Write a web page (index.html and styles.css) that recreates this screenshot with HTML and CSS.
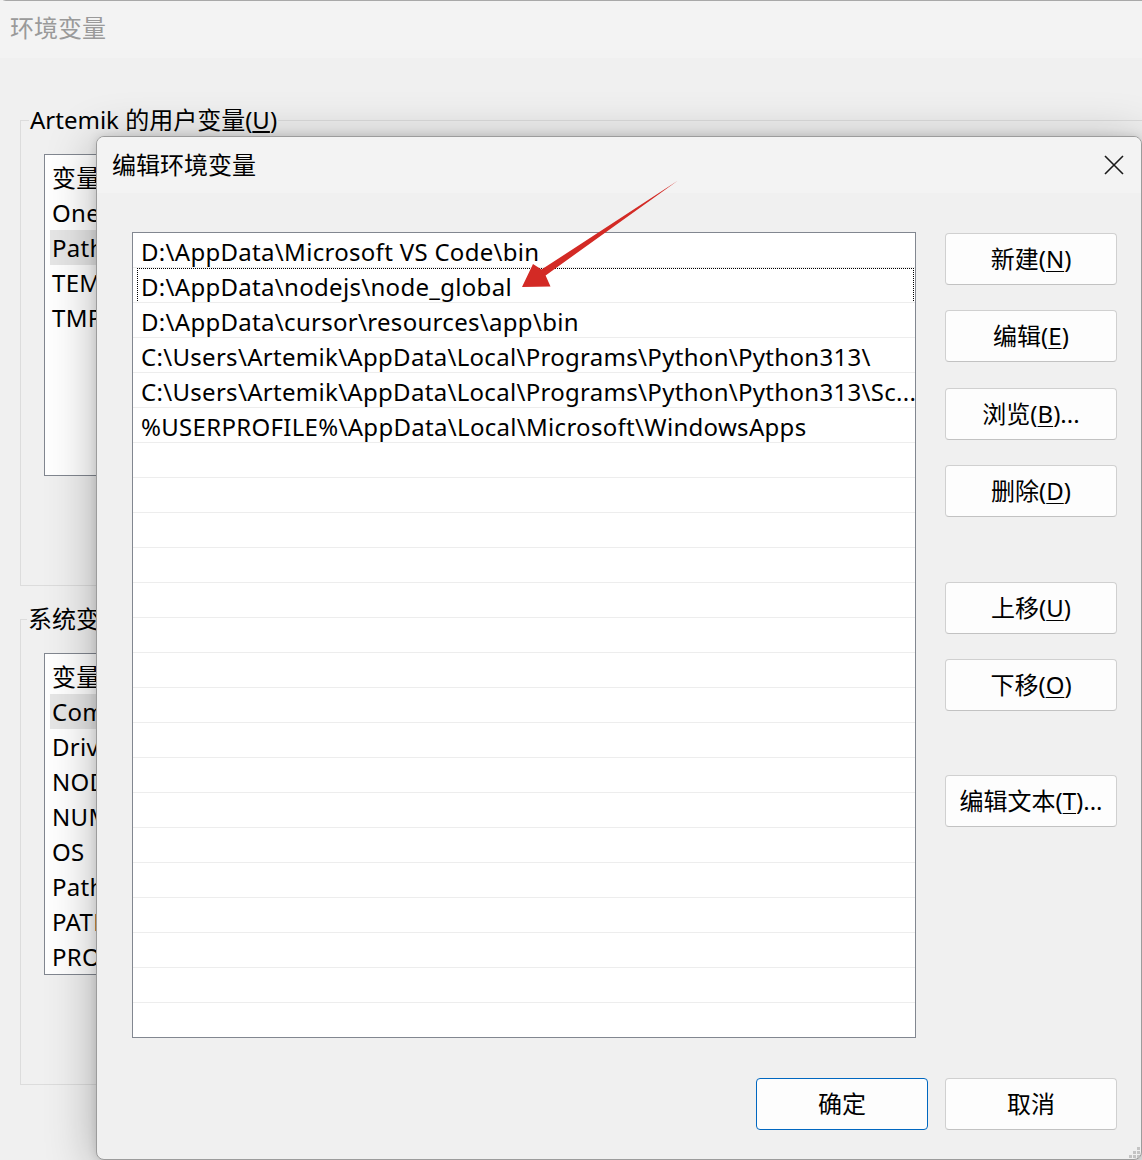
FILE: index.html
```html
<!DOCTYPE html>
<html lang="zh-CN">
<head>
<meta charset="utf-8">
<title>编辑环境变量</title>
<link rel="stylesheet" href="styles.css">
</head>
<body>
<div class="screen">
  <div class="bgwin">
    <div class="bg-title">环境变量</div>
    <div class="bg-body">
      <fieldset class="group">
        <legend>Artemik 的用户变量(<u>U</u>)</legend>
        <div class="varlist">
          <div class="vrow">变量</div>
          <div class="vrow">OneDrive</div>
          <div class="vrow sel">Path</div>
          <div class="vrow">TEMP</div>
          <div class="vrow">TMP</div>
        </div>
      </fieldset>
      <fieldset class="group group-sys">
        <legend>系统变量(<u>S</u>)</legend>
        <div class="varlist">
          <div class="vrow">变量</div>
          <div class="vrow sel">ComSpec</div>
          <div class="vrow">DriverData</div>
          <div class="vrow">NODE_PATH</div>
          <div class="vrow">NUMBER_OF_PROCESSORS</div>
          <div class="vrow">OS</div>
          <div class="vrow">Path</div>
          <div class="vrow">PATHEXT</div>
          <div class="vrow">PROCESSOR_ARCHITECTURE</div>
        </div>
      </fieldset>
    </div>
  </div>

  <div class="dialog">
    <div class="dlg-title">
      <span>编辑环境变量</span>
      <svg class="close" width="20" height="20" viewBox="0 0 20 20"><path d="M1 1 L19 19 M19 1 L1 19" stroke="#1a1a1a" stroke-width="1.6" fill="none"/></svg>
    </div>
    <div class="dlg-body">
      <div class="dlg-main">
        <div class="pathlist">
          <div class="prow">D:\AppData\Microsoft VS Code\bin</div>
          <div class="prow focus">D:\AppData\nodejs\node_global</div>
          <div class="prow">D:\AppData\cursor\resources\app\bin</div>
          <div class="prow">C:\Users\Artemik\AppData\Local\Programs\Python\Python313\</div>
          <div class="prow">C:\Users\Artemik\AppData\Local\Programs\Python\Python313\Sc...</div>
          <div class="prow">%USERPROFILE%\AppData\Local\Microsoft\WindowsApps</div>
          <div class="prow"></div><div class="prow"></div><div class="prow"></div>
          <div class="prow"></div><div class="prow"></div><div class="prow"></div>
          <div class="prow"></div><div class="prow"></div><div class="prow"></div>
          <div class="prow"></div><div class="prow"></div><div class="prow"></div>
          <div class="prow"></div><div class="prow"></div><div class="prow"></div>
          <div class="prow"></div><div class="prow"></div>
        </div>
        <div class="btncol">
          <button class="btn b-new">新建(<u>N</u>)</button>
          <button class="btn b-edit">编辑(<u>E</u>)</button>
          <button class="btn b-browse">浏览(<u>B</u>)...</button>
          <button class="btn b-del">删除(<u>D</u>)</button>
          <button class="btn b-up">上移(<u>U</u>)</button>
          <button class="btn b-down">下移(<u>O</u>)</button>
          <button class="btn b-text">编辑文本(<u>T</u>)...</button>
        </div>
      </div>
      <div class="dlg-foot">
        <button class="btn primary">确定</button>
        <button class="btn">取消</button>
      </div>
    </div>
    <svg class="grip" width="14" height="14" viewBox="0 0 14 14">
      <rect x="10" y="2" width="3" height="3" fill="#c4c4c4"/>
      <rect x="6" y="6" width="3" height="3" fill="#c4c4c4"/>
      <rect x="10" y="6" width="3" height="3" fill="#c4c4c4"/>
      <rect x="2" y="10" width="3" height="3" fill="#c4c4c4"/>
      <rect x="6" y="10" width="3" height="3" fill="#c4c4c4"/>
      <rect x="10" y="10" width="3" height="3" fill="#c4c4c4"/>
    </svg>
  </div>

  <svg class="arrow" width="1142" height="1160" viewBox="0 0 1142 1160">
    <polygon points="522,287 533,264 541.5,269.6 678,180.5 545.6,275.4 550.5,286.5" fill="#d32a25"/>
  </svg>
</div>
</body>
</html>
```

FILE: styles.css
```css
* { box-sizing: border-box; }

html, body {
  margin: 0;
  padding: 0;
}

body {
  width: 1142px;
  height: 1160px;
  overflow: hidden;
  background: #f0f0f0;
  font-family: "Noto Sans", "Noto Sans CJK SC", sans-serif;
  font-size: 24px;
  color: #000;
}

.screen {
  position: relative;
  width: 1142px;
  height: 1160px;
  overflow: hidden;
}

/* background window */
.bgwin {
  height: 1160px;
  background: #f0f0f0;
  border-top: 1px solid #a8a8a8;
  border-top-left-radius: 6px;
}

.bg-title {
  height: 57px;
  background: #f3f3f3;
  color: #9a9a9a;
  padding-left: 10px;
  line-height: 54px;
}

.bg-body {
  padding-top: 46px;
}

.group {
  margin: 0 0 0 20px;
  width: 1160px;
  border: 1px solid #dcdcdc;
  padding: 0 0 109px 23px;
  min-width: 0;
}

.group-sys {
  margin-top: 17px;
}

.group legend {
  margin-left: -15px;
  padding: 0 1px;
  line-height: 32px;
}

.group-sys legend {
  margin-left: -17px;
}

.varlist {
  margin-top: 18px;
  width: 300px;
  height: 322px;
  background: #ffffff;
  border: 1px solid #828790;
  padding: 5px 0 0 5px;
}

.vrow {
  height: 35px;
  line-height: 35px;
  padding-left: 2px;
  white-space: nowrap;
  letter-spacing: 0.3px;
}

.vrow.sel {
  background: #e6e6e6;
}

/* dialog */
.dialog {
  position: absolute;
  left: 96px;
  top: 136px;
  width: 1046px;
  height: 1024px;
  background: #f0f0f0;
  border: 1px solid #9c9c9c;
  border-radius: 8px;
  box-shadow: 0 8px 50px rgba(0, 0, 0, 0.30), 0 0 10px rgba(0, 0, 0, 0.12);
  overflow: hidden;
}

.dlg-title {
  height: 56px;
  background: #f3f3f3;
  display: flex;
  align-items: center;
  justify-content: space-between;
  padding: 0 17px 0 15px;
  line-height: 56px;
}

.close {
  display: block;
}

.dlg-body {
  padding: 39px 24px 0 35px;
}

.dlg-main {
  display: flex;
  gap: 29px;
}

.pathlist {
  width: 784px;
  height: 806px;
  background: #ffffff;
  border: 1px solid #828790;
  overflow: hidden;
  flex: none;
}

.prow {
  position: relative;
  height: 35px;
  padding-top: 2px;
  line-height: 33px;
  padding-left: 8px;
  border-bottom: 1px solid #ededed;
  white-space: nowrap;
  overflow: hidden;
  letter-spacing: 0.3px;
}

.prow.focus::after {
  content: "";
  position: absolute;
  left: 4px;
  right: 1px;
  top: 0;
  bottom: -1px;
  border: 1px dotted #000;
}

.btncol {
  display: flex;
  flex-direction: column;
  width: 172px;
}

.btn {
  display: block;
  width: 172px;
  height: 52px;
  background: #fdfdfd;
  border: 1px solid #d0d0d0;
  border-bottom-color: #c2c2c2;
  border-radius: 4px;
  font-family: inherit;
  font-size: 24px;
  color: #000;
  padding: 0;
  line-height: 48px;
  text-align: center;
}

.btn u {
  text-underline-offset: 3px;
  text-decoration-thickness: 1px;
}

.b-new { margin-top: 1px; }
.b-edit { margin-top: 25px; }
.b-browse { margin-top: 26px; }
.b-del { margin-top: 25px; }
.b-up { margin-top: 65px; }
.b-down { margin-top: 25px; }
.b-text { margin-top: 64px; }

.dlg-foot {
  display: flex;
  justify-content: flex-end;
  gap: 17px;
  margin-top: 40px;
}

.btn.primary {
  border: 1px solid #0067c0;
}

.grip {
  position: absolute;
  right: 0;
  bottom: 0;
}

.arrow {
  position: absolute;
  left: 0;
  top: 0;
  pointer-events: none;
}
```
